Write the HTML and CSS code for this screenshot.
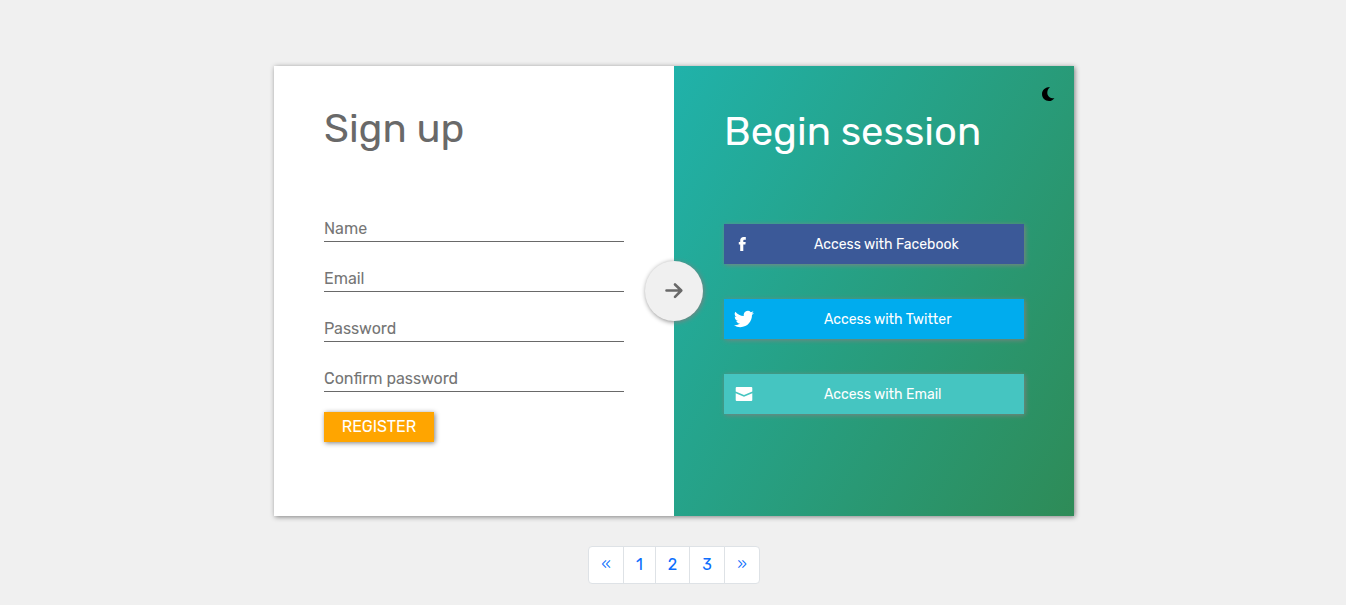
FILE: index.html
```html
<!DOCTYPE html>
<html lang="en">
<head>
<meta charset="utf-8">
<title>Sign up</title>
<link rel="stylesheet" href="styles.css">
</head>
<body>
<main class="card">
  <section class="signup">
    <h1 class="title title-signup">Sign up</h1>
    <form class="form">
      <input class="field" type="text" placeholder="Name">
      <input class="field" type="text" placeholder="Email">
      <input class="field" type="text" placeholder="Password">
      <input class="field" type="text" placeholder="Confirm password">
      <button class="register" type="button">REGISTER</button>
    </form>
  </section>
  <section class="session">
    <h1 class="title title-session">Begin session</h1>
    <div class="socials">
      <button class="social facebook" type="button">
        <svg class="icon" viewBox="0 0 20 20"><path d="M8.200 17V10.600H6.800V8H8.200V6.600C8.200 4.200 9.500 3 11.600 3H13.800V5.700H12.500C11.600 5.700 11.300 6 11.300 6.800V8H13.700L13.400 10.600H11.300V17Z"/></svg>
        <span class="label">Access with Facebook</span>
      </button>
      <button class="social twitter" type="button">
        <svg class="icon" viewBox="0 0 24 24"><path d="M23.950 4.570a10 10 0 0 1-2.820.780 4.960 4.960 0 0 0 2.160-2.730c-.950.560-2 .960-3.130 1.190a4.920 4.920 0 0 0-8.380 4.480C7.690 8.100 4.070 6.130 1.640 3.160a4.920 4.920 0 0 0 1.520 6.580 4.900 4.900 0 0 1-2.230-.620v.060a4.920 4.920 0 0 0 3.950 4.830 5 5 0 0 1-2.210.080 4.940 4.940 0 0 0 4.600 3.420A9.870 9.870 0 0 1 0 19.540a14 14 0 0 0 7.550 2.210c9.050 0 14-7.500 14-13.980 0-.210 0-.420-.020-.630a9.940 9.940 0 0 0 2.420-2.570z"/></svg>
        <span class="label">Access with Twitter</span>
      </button>
      <button class="social email" type="button">
        <svg class="icon" viewBox="0 0 20 20"><path d="M1.700 4Q1.700 3.100 2.700 3.100H17.300Q18.300 3.100 18.300 4V7.600L10 10.900L1.700 7.600ZM1.700 9.300L10 12.700L18.300 9.300V16Q18.300 16.900 17.300 16.900H2.700Q1.700 16.900 1.700 16Z"/></svg>
        <span class="label">Access with Email</span>
      </button>
    </div>
    <svg class="moon" viewBox="0 0 14 14"><path d="M8 0C5.300 2.200 4.600 6.200 6.200 8.800C7.500 11 9.800 11.700 12.400 10.900C11.300 12.900 9.300 14 7 14C3 14 0 11 0 7C0 3 3.500 0 8 0Z"/></svg>
  </section>
  <div class="switch">
    <svg class="arrow" viewBox="0 0 20 18"><path d="M2.500 8.500H17M11 2.500L17.300 8.500L11 14.800"/></svg>
  </div>
</main>
<nav class="pages">
  <a class="page p-prev">«</a><a class="page p-one">1</a><a class="page p-two">2</a><a class="page p-three">3</a><a class="page p-next">»</a>
</nav>
</body>
</html>
```

FILE: styles.css
```css
* { box-sizing: border-box; }
body {
  margin: 0;
  height: 605px;
  padding: 66px 0 0 2px;
  overflow: hidden;
  display: flex;
  flex-direction: column;
  align-items: center;
  background: #f0f0f0;
  font-family: Rubik, Roboto, sans-serif;
  font-size: 16px;
}
.card {
  position: relative;
  display: flex;
  width: 800px;
  height: 450px;
  background: #fff;
  box-shadow: 1px 1px 5px gray;
}
.signup, .session { width: 400px; padding: 0 50px; }
.session {
  position: relative;
  background: linear-gradient(120deg, #20b2aa, #2e8b57);
}
.title {
  margin: 0;
  font-size: 40px;
  line-height: 48px;
  font-weight: 400;
  white-space: nowrap;
}
.title-signup { padding-top: 39px; color: #696969; }
.title-session { padding-top: 42px; color: #fff; }
.form {
  display: flex;
  flex-direction: column;
  align-items: flex-start;
  gap: 20px;
  margin-top: 59px;
}
.field {
  width: 300px;
  height: 30px;
  padding: 3px 0 0;
  border: 0;
  border-bottom: 1px solid #696969;
  background: none;
  font: inherit;
  outline: none;
}
.field::placeholder { color: #757575; opacity: 1; }
.register {
  width: 110px;
  height: 30px;
  padding: 0 0 2px;
  border: 0;
  background: orange;
  color: #fff;
  font: inherit;
  box-shadow: 1px 1px 5px gray;
}
.socials { display: flex; flex-direction: column; gap: 35px; margin-top: 68px; }
.social {
  display: flex;
  align-items: center;
  width: 300px;
  height: 40px;
  padding: 0 10px;
  border: 0;
  color: #fff;
  font: 400 14px Rubik, Roboto, sans-serif;
  box-shadow: 1px 1px 5px gray;
}
.facebook { background: #3b5998; }
.twitter { background: #00acee; }
.email { background: #45c5c1; }
.icon { width: 20px; height: 20px; fill: #fff; }
.facebook .icon { margin-left: -2px; }
.label { margin-left: 70px; white-space: nowrap; }
.facebook .label { margin-left: 62px; }
.moon { position: absolute; top: 21px; right: 18px; width: 14px; height: 14px; }
.switch {
  position: absolute;
  left: 371px;
  top: 195px;
  display: flex;
  align-items: center;
  justify-content: center;
  width: 58px;
  height: 60px;
  border-radius: 50%;
  background: #f0f0f0;
  box-shadow: 1px 1px 5px gray;
}
.arrow {
  width: 20px;
  height: 18px;
  fill: none;
  stroke: #696969;
  stroke-width: 2.6;
  stroke-linecap: round;
  stroke-linejoin: round;
}
.pages { display: flex; margin-top: 30px; }
.page {
  height: 38px;
  margin-left: -1px;
  border: 1px solid #dee2e6;
  background: #fff;
  color: #0d6efd;
  line-height: 36px;
  text-align: center;
}
.p-prev { width: 36px; margin-left: 0; border-radius: 4px 0 0 4px; }
.p-one { width: 33px; }
.p-two { width: 35px; }
.p-three { width: 36px; }
.p-next { width: 36px; border-radius: 0 4px 4px 0; }
.p-prev, .p-next { font-weight: 300; }
```
